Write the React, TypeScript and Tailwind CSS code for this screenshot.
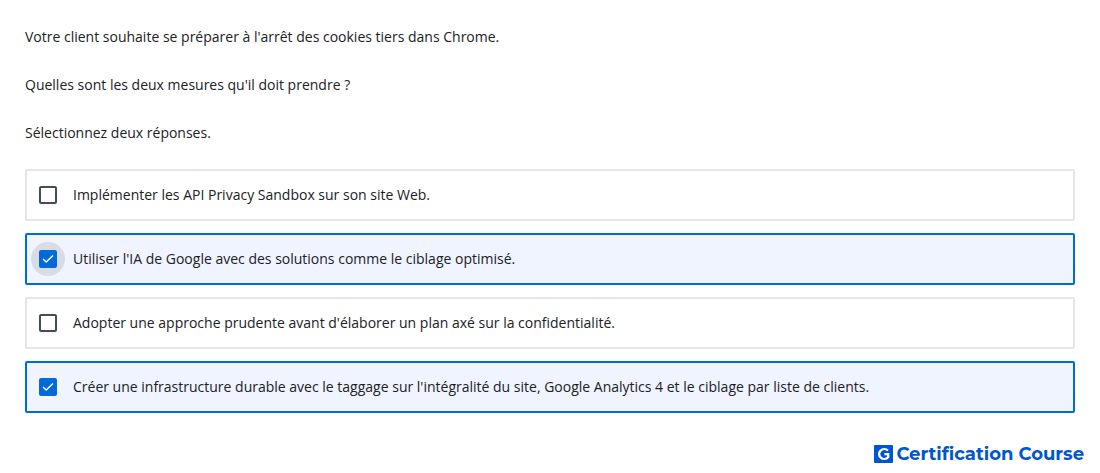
import clsx from 'clsx';
import React, { useState } from 'react';

interface IAnswerProps {
  id: string;
  label: string;
  checked: boolean;
  active: boolean;
  onToggle: () => void;
}

const ANSWERS = [
  { id: 'sandbox', label: 'Implémenter les API Privacy Sandbox sur son site Web.' },
  { id: 'ia', label: "Utiliser l'IA de Google avec des solutions comme le ciblage optimisé." },
  {
    id: 'prudente',
    label: "Adopter une approche prudente avant d'élaborer un plan axé sur la confidentialité.",
  },
  {
    id: 'taggage',
    label:
      "Créer une infrastructure durable avec le taggage sur l'intégralité du site, Google Analytics 4 et le ciblage par liste de clients.",
  },
];

const Answer: React.FC<IAnswerProps> = ({ id, label, checked, active, onToggle }) => (
  <label
    htmlFor={id}
    className={clsx(
      'flex min-h-13 cursor-pointer items-center gap-2 rounded-xs border-2 pr-4 pl-1',
      checked ? 'border-[#006adb] bg-[#eff4ff]' : 'border-[#e6e6e6] bg-white',
    )}>
    <span
      className={clsx(
        'grid size-[34px] shrink-0 place-items-center rounded-full',
        active && 'bg-[#d7dce6]',
      )}>
      <input
        id={id}
        type="checkbox"
        checked={checked}
        onChange={onToggle}
        className="peer col-start-1 row-start-1 size-[18px] cursor-pointer appearance-none rounded-xs border-2 border-[#414b5b] bg-white outline-none checked:border-[#006adb] checked:bg-[#006adb]"
      />
      <svg
        viewBox="0 0 18 18"
        aria-hidden="true"
        className="pointer-events-none col-start-1 row-start-1 hidden size-[18px] peer-checked:block">
        <path d="M4 9 L7.2 12 L14 5.5" fill="none" stroke="#fff" strokeWidth="1.4" />
      </svg>
    </span>
    <span>{label}</span>
  </label>
);

const Logo: React.FC = () => (
  <a
    href="#"
    className="flex items-center gap-[3px] font-[Montserrat,sans-serif] text-lg leading-6 font-bold text-[#0055d0]">
    <svg viewBox="0 0 19 18" aria-hidden="true" className="h-[18px] w-[19px]">
      <rect width="19" height="18" rx="1" fill="#0055d0" />
      <path
        d="M14 5.6 A5.2 4.8 0 1 0 14.2 12.2 V9.2 H10.4"
        fill="none"
        stroke="#fff"
        strokeWidth="2.3"
      />
    </svg>
    Certification Course
  </a>
);

const App: React.FC = () => {
  const [selected, setSelected] = useState<string[]>(['ia', 'taggage']);
  const [active, setActive] = useState('ia');

  const toggle = (id: string) => {
    setActive(id);
    setSelected((prev) => (prev.includes(id) ? prev.filter((item) => item !== id) : [...prev, id]));
  };

  return (
    <main className="bg-white pt-[25px] font-['Open_Sans',sans-serif] text-sm leading-6 text-[#202124]">
      <fieldset className="px-[25px]">
        <legend className="space-y-6 pb-6">
          <p>Votre client souhaite se préparer à l'arrêt des cookies tiers dans Chrome.</p>
          <p>Quelles sont les deux mesures qu'il doit prendre ?</p>
          <p>Sélectionnez deux réponses.</p>
        </legend>
        <div className="flex flex-col gap-3">
          {ANSWERS.map(({ id, label }) => (
            <Answer
              key={id}
              id={id}
              label={label}
              checked={selected.includes(id)}
              active={active === id}
              onToggle={() => toggle(id)}
            />
          ))}
        </div>
      </fieldset>
      <footer className="flex justify-end pt-[29px] pr-4">
        <Logo />
      </footer>
    </main>
  );
};

export default App;
